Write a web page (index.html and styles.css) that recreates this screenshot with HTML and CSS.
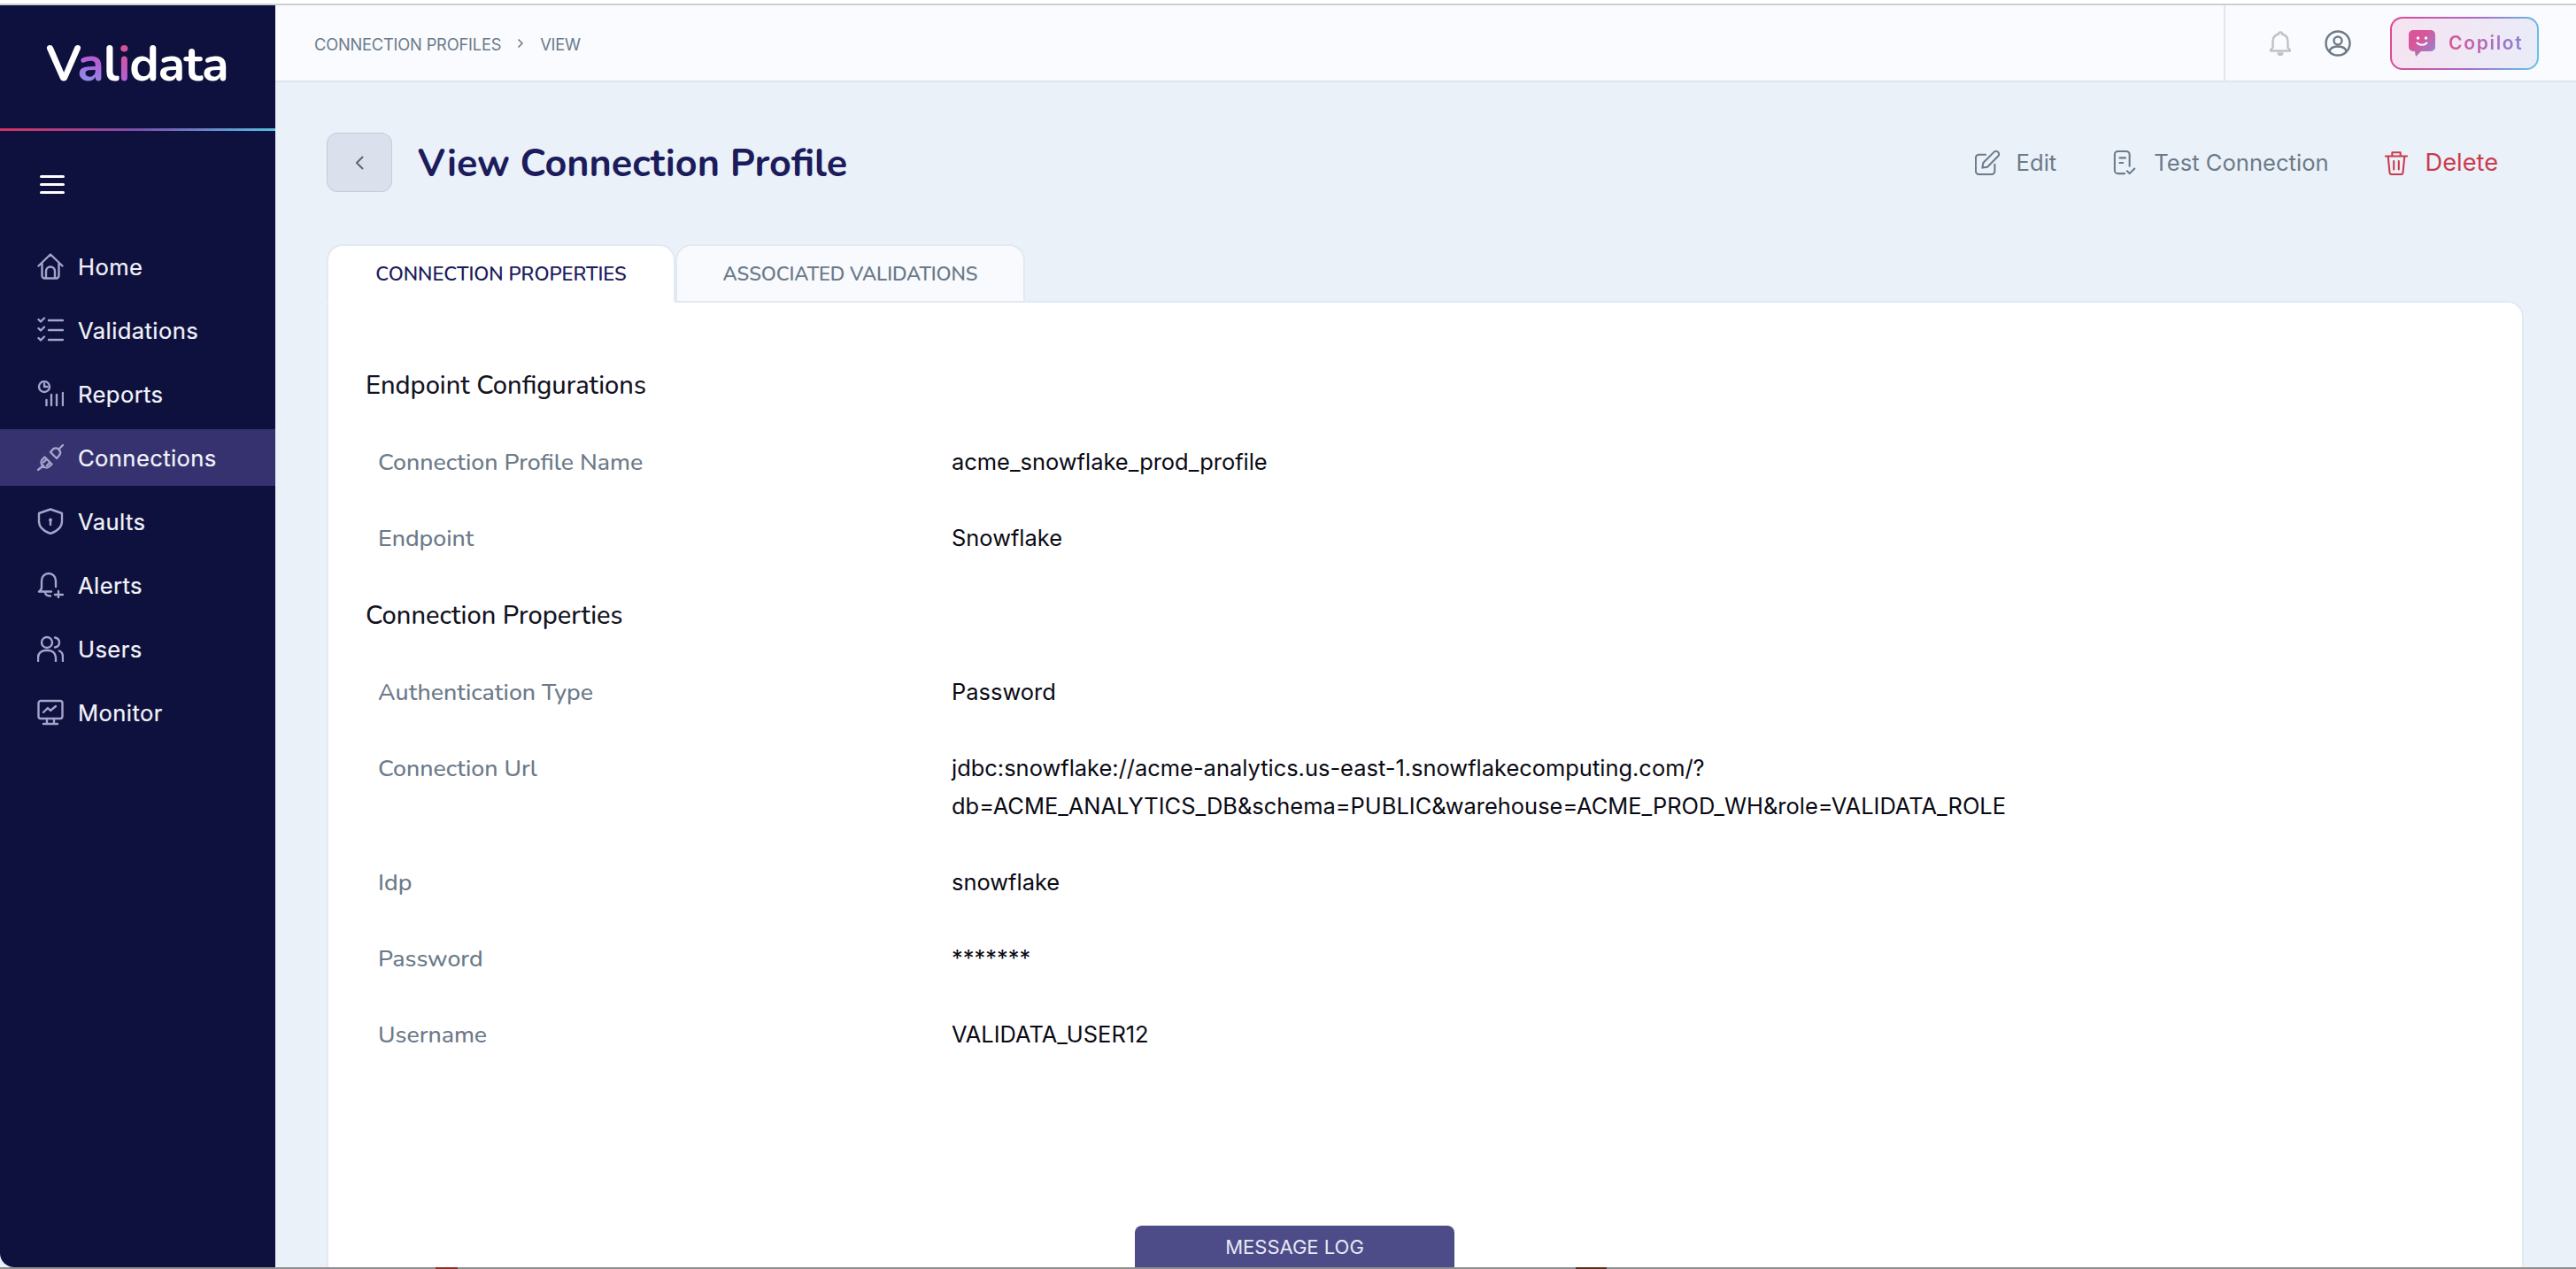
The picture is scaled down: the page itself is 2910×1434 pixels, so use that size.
FILE: index.html
```html
<!DOCTYPE html>
<html lang="en">
<head>
<meta charset="utf-8">
<title>View Connection Profile</title>
<link rel="stylesheet" href="styles.css">
</head>
<body>
<div class="window">
<aside class="sidebar">
  <div class="logo"><span>V</span><span class="g1">a</span><span>l</span><span class="g2">i</span><span>data</span></div>
  <div class="rule"></div>
  <button class="burger" aria-label="menu"><i></i><i></i><i></i></button>
  <nav class="nav">
    <a class="item"><svg viewBox="0 0 30 30"><path d="M1.500 14.500 15 1.500l13.500 13M5.500 11.500v14a3 3 0 0 0 3 3h13a3 3 0 0 0 3-3v-14M10 28.500v-8a5 5 0 0 1 10 0v8"/></svg>Home</a>
    <a class="item"><svg viewBox="0 0 30 30"><path d="M1.500 3l2.500 2.500L8 1.500M1.500 13l2.500 2.500L8 11.500M1.500 24l2.500 2.500L8 22.500M13 4h16M13 15h16M13 26h16"/></svg>Validations</a>
    <a class="item"><svg viewBox="0 0 30 30"><circle cx="8" cy="7" r="6"/><path d="M8 3.500V7h3.500M10.500 28v-6M16 28V16M22 28V16M29 28V14"/></svg>Reports</a>
    <a class="item active"><svg viewBox="0 0 30 30"><path d="M1 29l6-5M8.500 14.500l8 8-2.500 2.500a5 5 0 0 1-7 0l-1-1a5 5 0 0 1 0-7zM7 20.500l3-3M11 24l3-3M15 9l7 7 3-3.500a5 5 0 0 0 0-6l-1-1a5 5 0 0 0-6 0zM25 5l4-4"/></svg>Connections</a>
    <a class="item"><svg viewBox="0 0 30 30"><path d="M15 1.500 28 6v9c0 7-6 11.500-13 14C8 26.500 2 22 2 15V6z"/><circle cx="15" cy="13.500" r="2" class="fill"/><path d="M15 14v5"/></svg>Vaults</a>
    <a class="item"><svg viewBox="0 0 30 30"><path d="M21 17v-7c0-4.500-3.500-8-8-8s-8 3.500-8 8v8c0 2-1.500 3.500-3 4.500h14M9 23c0 3 2 4.500 6 4.500M24 22v8M20 26h9"/></svg>Alerts</a>
    <a class="item"><svg viewBox="0 0 30 30"><circle cx="11" cy="8" r="6"/><path d="M20 2.500c3 .5 5 2.800 5 5.500s-2 5-5 5.500M1 29v-4a8 8 0 0 1 8-8h4a8 8 0 0 1 8 8v4M25 17.500c2.500 1 4 4 4 7V29"/></svg>Users</a>
    <a class="item"><svg viewBox="0 0 30 30"><rect x="1.500" y="2" width="27" height="20" rx="2.500"/><path d="M7 15l5-5 3 3 6-5M11 22v5M19 22v5M7 28h16"/></svg>Monitor</a>
  </nav>
</aside>
<div class="main">
  <header class="topbar">
    <div class="crumbs"><span>CONNECTION PROFILES</span><svg class="crumb-sep" viewBox="0 0 8 12"><path d="M1.500 1.500 6 6l-4.500 4.500"/></svg><span>VIEW</span></div>
    <div class="top-actions">
      <svg class="bell" viewBox="0 0 24 28"><path d="M12 1.500a2 2 0 0 1 2 2c4 1 6.500 4.200 6.500 8.500v7l2.500 2.500v1H1v-1L3.500 19v-7C3.500 7.700 6 4.500 10 3.500a2 2 0 0 1 2-2zM9.500 25.500h5L12 28z"/></svg>
      <svg class="user" viewBox="0 0 30 30"><circle cx="15" cy="15" r="13.500"/><circle cx="15" cy="12" r="4.500"/><path d="M5.500 24c1-4 4-5.500 9.500-5.500s8.500 1.500 9.500 5.500"/></svg>
      <button class="copilot">
        <svg viewBox="0 0 30 30"><defs><linearGradient id="cg" x1="0" y1="0" x2="1" y2="1"><stop offset=".35" stop-color="#d9559a"/><stop offset="1" stop-color="#8a8bd6"/></linearGradient></defs><path fill="url(#cg)" d="M5 0h20a5 5 0 0 1 5 5v14a5 5 0 0 1-5 5H14l-6 6-1-6H5a5 5 0 0 1-5-5V5a5 5 0 0 1 5-5z"/><circle cx="10.500" cy="9" r="1.700" fill="#fff"/><circle cx="19.500" cy="9" r="1.700" fill="#fff"/><path d="M9.500 14.500c3 3 8 3 11 0" stroke="#fff" stroke-width="2" fill="none" stroke-linecap="round"/></svg>
        <span>Copilot</span>
      </button>
    </div>
  </header>
  <section class="content">
    <div class="page-head">
      <div class="head-left">
        <button class="back" aria-label="back"><svg viewBox="0 0 12 18"><path d="M10 2 3 9l7 7"/></svg></button>
        <h1>View Connection Profile</h1>
      </div>
      <div class="head-actions">
        <a class="act"><svg viewBox="0 0 30 30"><path d="M13 5H5a4 4 0 0 0-4 4v16a4 4 0 0 0 4 4h15a4 4 0 0 0 4-4v-8M9 21l1-6L23 2a3 3 0 0 1 5 5L15 20z"/></svg>Edit</a>
        <a class="act act-test"><svg viewBox="0 0 30 30"><path d="M14 28H6a4 4 0 0 1-4-4V5a4 4 0 0 1 4-4h10a4 4 0 0 1 4 4v14M8 9h7M8 15h4M17 25l3 3 6-6"/></svg>Test Connection</a>
        <a class="act del"><svg viewBox="0 0 30 30"><path d="M2 7h26M10 7V2.500h10V7M5 7l2 20a2.500 2.500 0 0 0 2.500 2h11a2.500 2.500 0 0 0 2.500-2l2-20M12 13v10M18 13v10"/></svg>Delete</a>
      </div>
    </div>
    <div class="tabs">
      <div class="tab on">CONNECTION PROPERTIES</div>
      <div class="tab off">ASSOCIATED VALIDATIONS</div>
    </div>
    <div class="card">
      <h2>Endpoint Configurations</h2>
      <div class="row"><div class="k">Connection Profile Name</div><div class="v">acme_snowflake_prod_profile</div></div>
      <div class="row"><div class="k">Endpoint</div><div class="v">Snowflake</div></div>
      <h2 class="h2b">Connection Properties</h2>
      <div class="row"><div class="k">Authentication Type</div><div class="v">Password</div></div>
      <div class="row"><div class="k">Connection Url</div><div class="v">jdbc:snowflake://acme-analytics.us-east-1.snowflakecomputing.com/?<br>db=ACME_ANALYTICS_DB&amp;schema=PUBLIC&amp;warehouse=ACME_PROD_WH&amp;role=VALIDATA_ROLE</div></div>
      <div class="row"><div class="k">Idp</div><div class="v">snowflake</div></div>
      <div class="row"><div class="k">Password</div><div class="v">*******</div></div>
      <div class="row"><div class="k">Username</div><div class="v">VALIDATA_USER12</div></div>
    </div>
    <div class="msglog">MESSAGE LOG</div>
  </section>
</div>
</div>
<div class="dock"></div>
</body>
</html>
```
FILE: styles.css
```css
* { box-sizing: border-box; }
html, body { margin: 0; height: 100%; overflow: hidden; background: #fff; }
body { font-family: Inter, "Liberation Sans", sans-serif; padding-top: 4px; }
.window { height: 1428px; display: flex; flex-direction: column; flex-wrap: wrap; border-top: 2px solid #cdd0d3; background: #eaf1f9; position: relative; overflow: hidden; }
.dock { height: 2px; background: linear-gradient(90deg, #8f8f8f 0 492px, #8a3028 492px 517px, #8f8f8f 517px 1780px, #5a3020 1780px 1815px, #8f8f8f 1815px); }
.sidebar { width: 311px; height: 1426px; background: #0e103d; border-bottom-left-radius: 16px; color: #f2f3fa; }
.logo { height: 139px; padding: 27px 0 0 52px; font-family: "Nunito", Lato, "Noto Sans", sans-serif; font-size: 56px; line-height: 80px; font-weight: 700; color: #fff; letter-spacing: -1.300px; white-space: nowrap; }
.g1 { background: linear-gradient(20deg, #6fb2f2 5%, #b45ed8 55%, #c95aa8); -webkit-background-clip: text; background-clip: text; color: transparent; }
.g2 { background: linear-gradient(180deg, #e04e88 15%, #a966e6 90%); -webkit-background-clip: text; background-clip: text; color: transparent; }
.rule { height: 3px; background: linear-gradient(90deg, #d8315f, #7b4fa8 50%, #55bfe2); }
.burger { display: flex; flex-direction: column; gap: 6px; margin: 50px 0 0 45px; padding: 0; border: 0; background: none; width: 28px; }
.burger i { display: block; height: 3px; border-radius: 2px; background: #fff; }
.nav { display: flex; flex-direction: column; margin-top: 50px; }
.item { height: 64px; margin-bottom: 8px; display: flex; align-items: center; gap: 16px; padding-left: 42px; font-size: 25.600px; font-weight: 400; letter-spacing: .4px; color: #f2f3fa; -webkit-text-stroke: .2px #f2f3fa; }
.item svg { width: 30px; height: 30px; flex: none; fill: none; stroke: #a5a5cb; stroke-width: 2.400; stroke-linecap: round; stroke-linejoin: round; }
.item svg .fill { fill: #a5a5cb; stroke: none; }
.item.active { background: #35326f; }
.main { width: 2599px; height: 1426px; }
.topbar { height: 87px; background: #f9fbff; border-bottom: 2px solid #dfe5ee; display: flex; justify-content: space-between; padding-left: 44px; }
.crumbs { display: flex; align-items: center; gap: 18px; color: #6c7a89; font-size: 18.300px; letter-spacing: -.2px; padding-top: 3px; }
.crumb-sep { width: 8px; height: 12px; fill: none; stroke: #6c7a89; stroke-width: 1.500; margin-bottom: 2px; }
.top-actions { display: flex; align-items: center; width: 398px; border-left: 2px solid #e2e7ef; padding-left: 50px; }
.bell { width: 24px; height: 28px; fill: none; stroke: #bfc2c5; stroke-width: 2.400; stroke-linejoin: round; }
.user { width: 30px; height: 30px; fill: none; stroke: #6d7a86; stroke-width: 2.400; margin-left: 38px; }
.copilot { display: flex; align-items: center; gap: 15px; width: 168px; height: 60px; margin-left: 44px; padding: 0 0 0 19px; border: 2px solid transparent; border-radius: 14px; font-family: inherit; background: linear-gradient(110deg, #f6e3f1, #e9ecf8) padding-box, linear-gradient(100deg, #e0488f, #a86cc6 55%, #62c6ea) border-box; }
.copilot svg { width: 30px; height: 30px; flex: none; }
.copilot span { font-size: 21px; font-weight: 600; letter-spacing: 1.700px; background: linear-gradient(90deg, #d9559a, #8a7fd6); -webkit-background-clip: text; background-clip: text; color: transparent; }
.content { position: relative; height: 1339px; padding: 0 59px 0 58px; }
.page-head { height: 183px; display: flex; justify-content: space-between; align-items: center; padding-bottom: 2px; }
.head-left { display: flex; align-items: center; gap: 29px; }
.back { width: 74px; height: 67px; border: 1px solid #c3cbd9; border-radius: 12px; background: #dbe1ec; display: flex; align-items: center; justify-content: center; padding: 0; }
.back svg { width: 12px; height: 18px; fill: none; stroke: #5b6570; stroke-width: 2; }
h1 { margin: 0; padding-top: 2px; font-family: "Nunito", "Noto Sans", "Open Sans", sans-serif; font-size: 43.200px; font-weight: 700; color: #1c1c5c; }
.head-actions { display: flex; align-items: center; padding-right: 29px; }
.act { display: flex; align-items: center; gap: 19px; margin-left: 62px; color: #6c7a89; font-size: 25.600px; }
.act-test { gap: 18px; margin-left: 64px; }
.act svg { width: 28px; height: 28px; fill: none; stroke: currentColor; stroke-width: 2.200; stroke-linecap: round; stroke-linejoin: round; }
.act.del { color: #cb3a4d; font-size: 27.200px; }
.tabs { display: flex; height: 66px; }
.tab { display: flex; align-items: center; justify-content: center; width: 394px; padding-top: 2px; border: 2px solid #e3e9f2; border-radius: 18px 18px 0 0; background: #f8fafe; color: #6c7a89; font-family: "Nunito", "Noto Sans", sans-serif; font-size: 22px; font-weight: 600; }
.tab.off { width: 395px; letter-spacing: -.1px; }
.tab.on { background: #fff; color: #1c1c5c; border-bottom-color: #fff; position: relative; z-index: 1; }
.card { height: 1100px; margin-bottom: -100px; background: #fff; border: 2px solid #e3e9f2; border-radius: 0 18px 0 0; padding: 67px 42px 0; margin-top: -2px; }
h2 { margin: 0 0 37px; font-family: "Nunito", "Noto Sans", sans-serif; font-size: 29px; line-height: 54px; font-weight: 500; color: #14141f; }
.h2b { margin: -3px 0 37px; }
.row { display: flex; margin-bottom: 43px; line-height: 43px; }
.k { width: 662px; height: 43px; line-height: 45px; padding-left: 14px; flex: none; font-family: "Nunito", "Noto Sans", sans-serif; font-size: 26.700px; font-weight: 500; color: #6c7a89; }
.v { font-size: 25.450px; font-weight: 400; color: #0a0a14; }
.msglog { position: absolute; bottom: 0; left: 971px; width: 361px; height: 47px; background: #4d4c89; border-radius: 8px 8px 0 0; color: #e7e8f5; font-size: 22px; display: flex; align-items: center; justify-content: center; }
```
